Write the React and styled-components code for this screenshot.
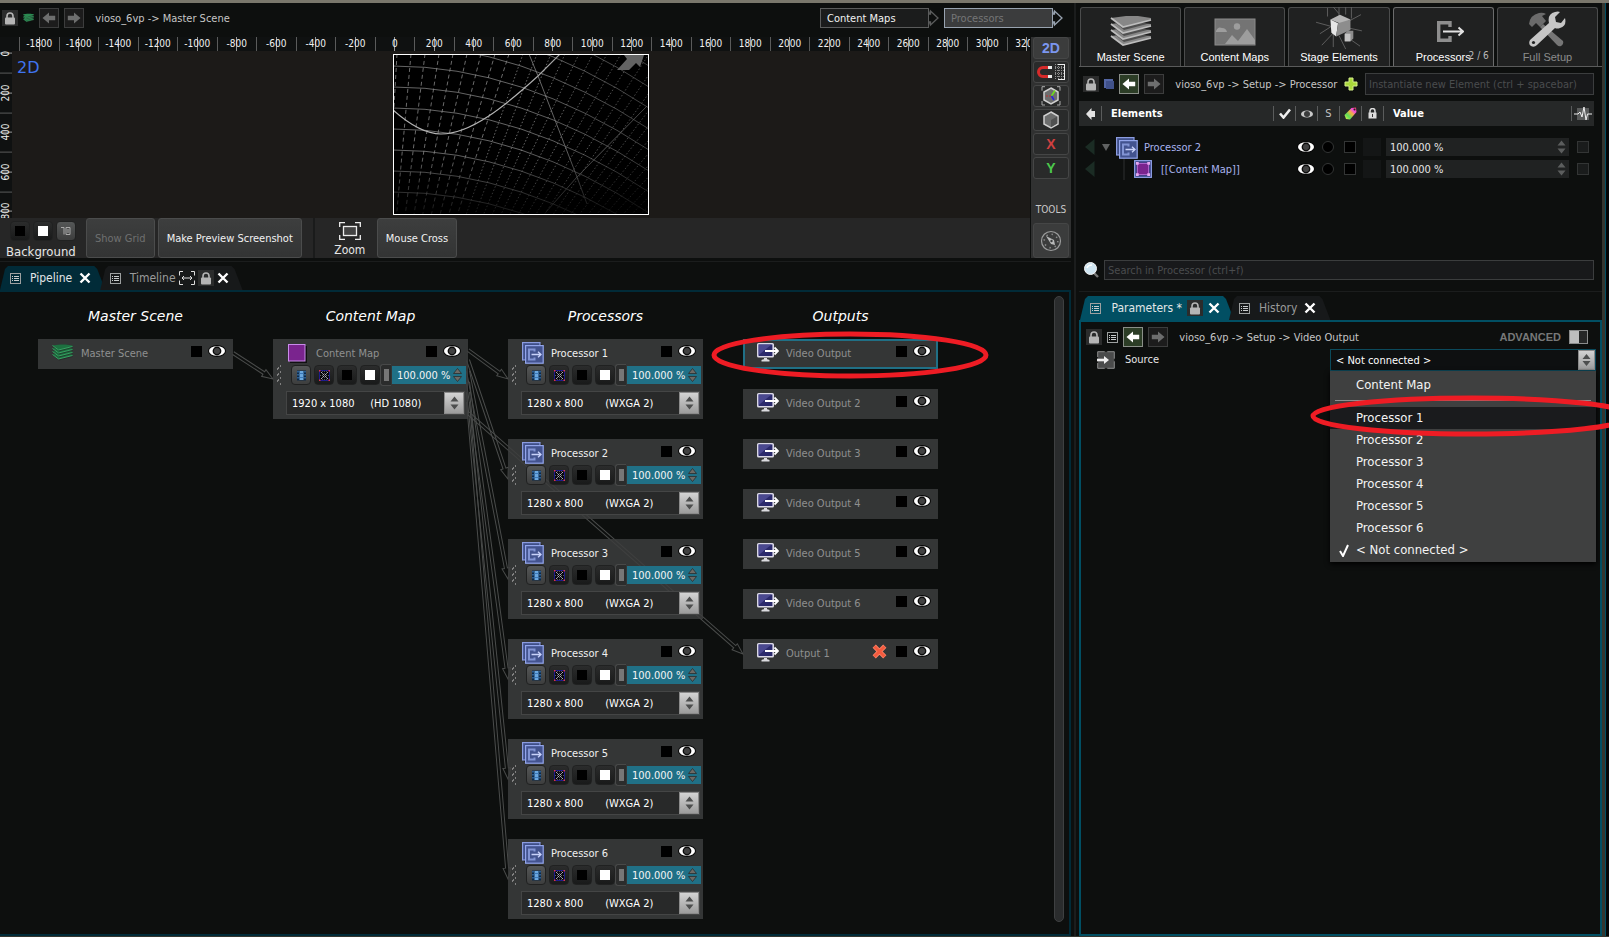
import styled, { createGlobalStyle, css } from "styled-components"

const GlobalStyle = createGlobalStyle`
    :root {
        --bg: #0d0f0e;
        --edge: #1b1d1d;
        --card: rgba(60, 61, 61, 0.85);
        --teal-dark: #012b38;
        --teal: #014f63;
        --accent: #207086;
        --muted: #8f9090;
        --text: #e6e6e6;
        --ui: "DejaVu Sans Condensed", "DejaVu Sans", sans-serif;
        --label: "Liberation Sans", Arial, sans-serif;
    }

    * {
        box-sizing: border-box;
    }

    body {
        margin: 0;
        background: var(--bg);
        color: var(--text);
        font: 11px/14px var(--ui);
        overflow: hidden;
    }

    button, input, select {
        font: inherit;
        color: inherit;
        margin: 0;
        padding: 0;
        border: 0;
        border-radius: 0;
        background: none;
    }

    svg {
        display: block;
        flex: none;
    }
`

const Page = styled.div`
    min-height: 100vh;
    display: flex;
    flex-direction: column;
    border-top: 3px solid #7a776c;
    border-bottom: 1px solid #35362f;
`

const Workspace = styled.div`
    flex: 1;
    display: grid;
    grid-template-columns: minmax(0, 1fr) 8px 523px 7px;
`

const LeftSide = styled.div`
    display: flex;
    flex-direction: column;
    gap: 3px;
    min-width: 0;
`

const Splitter = styled.div`
    border: solid var(--edge);
    border-width: 0 1px;
    margin: 0 3px;
`

const WindowEdge = styled.div`
    border-left: 3px solid #35362f;
    border-right: 3px solid #050505;
    background: var(--teal);
`

/* ---------- shared bits ---------- */

const IconBox = styled.button`
    display: grid;
    place-items: center;
    width: 16px;
    height: 16px;
    background: #2b2c2c;
`

const NavButton = styled.button`
    display: grid;
    place-items: center;
    width: 20px;
    height: 20px;
    color: ${(props) => (props.$active ? "#ffffff" : "#6d6e6e")};
    background: ${(props) => (props.$active ? "#2c3d26" : "#1c1c1c")};
    border: 1px solid ${(props) => (props.$active ? "#8a8f88" : "#3c3d3d")};
`

const Crumb = styled.span`
    padding-top: 2px;
    color: #c6c6c6;
    white-space: pre;
`

const TabStrip = styled.div`
    display: flex;
    align-items: flex-end;
    height: 29px;
    border-top: 1px solid var(--edge);
    padding-left: ${(props) => props.$inset || 0}px;
`

const Tab = styled.div`
    display: flex;
    align-items: center;
    gap: ${(props) => props.$gap || 7}px;
    height: 24px;
    padding: 0 14px 0 10px;
    font-size: 12px;
    color: ${(props) => (props.$active ? "#e2e6e7" : "#9a9b9b")};
    background: ${(props) => (props.$active ? props.$active : "#17191a")};
    clip-path: polygon(0 100%, 5px 3px, 8px 0, calc(100% - 11px) 0, calc(100% - 8px) 3px, 100% 100%);

    & + & {
        margin-left: -5px;
    }

    & span {
        margin-left: 2px;
    }
`

const LockIcon = ({ color = "#b5b5b5" }) => (
    <svg width="12" height="13" viewBox="0 0 12 13">
        <path d="M3 6V4a3 3 0 0 1 6 0v2" fill="none" stroke={color} strokeWidth="1.6" />
        <rect x="1" y="5.5" width="10" height="7" rx="1" fill={color} />
    </svg>
)

const ArrowIcon = ({ flip }) => (
    <svg width="14" height="12" viewBox="0 0 14 12">
        <path
            d="M0.5 6 7 0.5v3.2h6.2v4.6H7v3.2z"
            fill="currentColor"
            transform={flip ? "rotate(180 7 6)" : undefined}
        />
    </svg>
)

const ListIcon = () => (
    <svg width="11" height="11" viewBox="0 0 11 11">
        <rect x="0.5" y="0.5" width="10" height="10" fill="none" stroke="#9da0a0" />
        <path d="M2 3.5h1M4 3.5h5M2 5.5h1M4 5.5h5M2 7.5h1M4 7.5h5" stroke="#c9cccc" />
    </svg>
)

const CloseIcon = () => (
    <svg width="12" height="12" viewBox="0 0 12 12">
        <path d="M1.500 1.500l9 9M10.500 1.500l-9 9" stroke="#fff" strokeWidth="2.400" />
    </svg>
)

const FitIcon = () => (
    <svg width="16" height="14" viewBox="0 0 16 14">
        <path d="M4 .5H.5v4M12 .5h3.500v4M.5 9.500v4H4M15.500 9.500v4H12" fill="none" stroke="#ddd" />
        <path d="M3 7h10M5 5 3 7l2 2M11 5l2 2-2 2" fill="none" stroke="#ddd" />
    </svg>
)

const EyeIcon = () => (
    <svg width="18" height="12" viewBox="0 0 18 12">
        <ellipse cx="9" cy="6" rx="9" ry="6" fill="#080808" />
        <ellipse cx="9" cy="6" rx="8" ry="4.800" fill="#fff" />
        <circle cx="9" cy="6" r="4.400" fill="#0c0c0c" />
        <circle cx="9" cy="6" r="3" fill="#414141" />
    </svg>
)

const Steps = ({ color = "#6d6f6f", outline, gap = 0 }) => (
    <svg width="9" height="14" viewBox="0 0 9 14">
        <path
            d={`M0.5 ${6 - gap / 2}h8L4.5 ${1 - gap / 2}zM0.5 ${8 + gap / 2}h8L4.5 ${13 + gap / 2}z`}
            fill={color}
            stroke={outline}
            strokeWidth="0.8"
        />
    </svg>
)

const ProcessorIcon = () => (
    <svg width="22" height="24" viewBox="0 -2 22 24">
        <path d="M18 1l2 2H18zM1 18l3 3v-3z" fill="#080808" />
        <rect x="0.6" y="0.6" width="17.400" height="17.400" fill="#3f4f88" stroke="#8b9ce0" strokeWidth="1.200" />
        <rect x="3.600" y="3.600" width="17.600" height="17.600" fill="#43538f" stroke="#93a5ea" strokeWidth="1.200" />
        <path d="M12.500 9.500V7.500H7v10h5.500v-2" fill="none" stroke="#8294d4" strokeWidth="2" />
        <path d="M9.500 12.500h9M16 9.800l3 2.700-3 2.700" fill="none" stroke="#c9d2fa" strokeWidth="1.300" />
    </svg>
)

// stack of four sheets, drawn from the bottom one up
const LayersIcon = ({ width, height, face, line }) => (
    <svg width={width} height={height} viewBox="0 0 42 34">
        {[19, 13, 7, 1].map((y) => (
            <g key={y}>
                <path d={`M1 ${y + 3}L14 ${y + 14} 41 ${y + 7} 41 ${y + 2} 28 ${y} 16 ${y}z`} fill="#202121" fillOpacity="0.55" />
                <path d={`M1 ${y + 2}L13 ${y + 11} 41 ${y + 4} 41 ${y + 2} 28 ${y} 16 ${y}z`} fill={face} />
                <path d={`M1 ${y + 2}L13 ${y + 11} 41 ${y + 4}`} fill="none" stroke={line} strokeWidth="1.700" />
            </g>
        ))}
    </svg>
)

/* ---------- scene viewport ---------- */

const SceneHeader = styled.header`
    display: flex;
    align-items: center;
    justify-content: space-between;
    height: 34px;
    margin-bottom: -3px;
    padding: 0 8px 4px 2px;
`

const HeaderGroup = styled.div`
    display: flex;
    align-items: center;
    gap: 5px;
`

const StageButton = styled.button`
    display: flex;
    align-items: center;
    height: 20px;
    color: ${(props) => (props.$current ? "#757677" : "#f2f2f2")};

    & span {
        width: 109px;
        height: 20px;
        padding-left: 6px;
        line-height: 20px;
        text-align: left;
        background: ${(props) => (props.$current ? "#3b3c3d" : "#1b1c1c")};
        border: 1px solid ${(props) => (props.$current ? "#98a3b0" : "#5b5c5c")};
    }

    & svg {
        color: ${(props) => (props.$current ? "#98a3b0" : "#5b5c5c")};
    }
`

const Viewport = styled.section`
    display: grid;
    grid-template-columns: minmax(0, 1fr) 40px;
    column-gap: 1px;
    height: 221px;
`

const ViewportMain = styled.div`
    display: grid;
    grid-template: 14px 167px 40px / 12px minmax(0, 1fr);
`

const TopRuler = styled.div`
    grid-column: 1 / -1;
    overflow: hidden;
    background: #0f1111;
`

const TopTicks = styled.div`
    display: grid;
    grid-template-columns: repeat(26, 1fr);
    height: 14px;
    margin: 0 -16px 0 19px;
`

const TopTick = styled.span`
    display: flex;
    justify-content: center;
    font-size: 10px;
    line-height: 14px;
    color: #f0f0f0;
    border-left: 1px solid #5a5b5b;
    background: linear-gradient(#999, #999) center / 1px 100% no-repeat;
`

const SideRuler = styled.div`
    overflow: hidden;
    background: #0f1111;
`

const SideTicks = styled.div`
    display: grid;
    grid-template-rows: repeat(5, 1fr);
    height: 198px;
    margin-top: -17px;
`

const SideTick = styled.span`
    writing-mode: vertical-rl;
    rotate: 180deg;
    text-align: center;
    width: 12px;
    font-size: 10px;
    line-height: 12px;
    color: #f0f0f0;
    border-top: 1px solid #5a5b5b;
    background: linear-gradient(#999, #999) center / 100% 1px no-repeat;
`

const Canvas = styled.div`
    position: relative;
    display: flex;
    justify-content: center;
    align-items: flex-start;
    padding-top: 3px;
    background: #1c1a18;
`

const ModeLabel = styled.span`
    position: absolute;
    left: 5px;
    top: 7px;
    font: 16px/20px "DejaVu Sans", sans-serif;
    color: #3f74f0;
`

const ViewToolbar = styled.div`
    grid-column: 1 / -1;
    display: flex;
    background: #262626;
`

const SwatchGroup = styled.div`
    width: 86px;
    padding: 3px 0 0 6px;
    font-size: 13px;
    line-height: 22px;
`

const SwatchRow = styled.div`
    display: flex;
    gap: 3px;
    padding-left: 4px;
`

const Swatch = styled.button`
    display: grid;
    place-items: center;
    width: 20px;
    height: 20px;
    border-radius: 4px;
    background: ${(props) => (props.$raised ? "linear-gradient(#555757, #3d3e3e)" : "linear-gradient(#2b2c2c, #191a1a)")};
    border: 1px solid #202121;

    &::before {
        content: "";
        display: ${(props) => (props.$fill ? "block" : "none")};
        width: 10px;
        height: 10px;
        background: ${(props) => props.$fill};
    }
`

const ToolButton = styled.button`
    height: 40px;
    padding: 1px 8px 0;
    margin-right: 3px;
    border: 1px solid #4b4c4c;
    border-radius: 3px;
    background: linear-gradient(#3d3e3e, #333434);
    color: #f2f2f2;

    &:disabled {
        color: #6f7070;
    }
`

const ZoomTool = styled.button`
    display: flex;
    flex-direction: column;
    align-items: center;
    gap: 1px;
    width: 64px;
    margin-left: 8px;
    padding: 4px 0 0 8px;
    font-size: 12px;
    line-height: 18px;
    border-left: 2px solid #1a1b1b;
`

const ToolColumn = styled.aside`
    display: flex;
    flex-direction: column;
    gap: 2px;
    padding: 0 2px;
    background: #303131;
`

const SideButton = styled.button`
    display: grid;
    place-items: center;
    height: ${(props) => props.$height || 22}px;
    border: 1px solid #454646;
    border-radius: 3px;
    background: ${(props) => (props.$on ? "#3b3c3c" : "#292a2a")};
    color: ${(props) => props.$color};
    font: bold 14px/20px var(--label);
`

const ToolsLabel = styled.span`
    margin-top: auto;
    padding-bottom: 4px;
    text-align: center;
    font-size: 10px;
    line-height: 14px;
    color: #c9c9c9;
`

const xLabels = Array.from({ length: 26 }, (_, i) => i * 200 - 1800)
const yLabels = [0, 200, 400, 600, 800]

const arcs = Array.from({ length: 12 }, (_, i) => 12 + (i - 5) * 21)
const spokes = Array.from({ length: 31 }, (_, i) => 24 + i * 14)

function ScenePreview() {
    return (
        <svg width="256" height="161" viewBox="0 0 256 161">
            <defs>
                <linearGradient id="fadeDown" x2="0" y2="1">
                    <stop offset="0.6" stopOpacity="0" />
                    <stop offset="1" stopOpacity="0.8" />
                </linearGradient>
                <linearGradient id="fadeRight">
                    <stop offset="0.5" stopOpacity="0" />
                    <stop offset="1" stopOpacity="0.4" />
                </linearGradient>
            </defs>
            <rect width="256" height="161" fill="#000" />
            <g fill="none" strokeWidth="0.8">
                {arcs.map((y) => (
                    <path key={y} d={`M0 ${y}Q128 ${y} 256 ${y + 84}`} stroke="#7d7d7d" />
                ))}
                {spokes.map((x) => (
                    <line
                        key={x}
                        x1={x - 20}
                        y1="0"
                        x2={x * 0.62 - 20}
                        y2="161"
                        stroke="#868686"
                        strokeDasharray={x < 150 ? "4 3" : "1.500 2"}
                    />
                ))}
                <path d="M0 56C18 72 33 80 48 80C78 80 112 52 145 22L167 0" stroke="#b5b5b5" strokeWidth="1.100" />
                <path d="M136 0l9 22 39 101 10 27M254 52l-70 71-31 35" stroke="#8a8a8a" />
            </g>
            <rect width="256" height="161" fill="url(#fadeDown)" />
            <rect width="256" height="161" fill="url(#fadeRight)" />
            <path d="M224 16l10-11-3-4h20l-4 12-4-4-7 7z" fill="#636363" />
            <rect x="0.5" y="0.5" width="255" height="160" fill="none" stroke="#fff" />
        </svg>
    )
}

const MagnetIcon = () => (
    <svg width="30" height="18" viewBox="0 0 30 18">
        <path d="M13 4.500H7a4.500 4.500 0 0 0 0 9h6" fill="none" stroke="#d62a2a" strokeWidth="3" />
        <path d="M12 4.500h4M12 13.500h4" stroke="#e8e8e8" strokeWidth="3" />
        <path
            d="M19 1.500h9M19 4.500h9M19 7.500h9M19 10.500h9M19 13.500h9M19.500 1v15M22.500 1v15M25.500 1v15"
            fill="none"
            stroke="#8e8e8e"
            strokeDasharray="1 1"
        />
        <path d="M28.500 1v16M22 1.500h7M22 16.500h7" stroke="#eee" />
    </svg>
)

const CubeIcon = ({ axes }) => (
    <svg width="20" height="20" viewBox="0 0 20 20">
        <path d="M10 2l7 4v8l-7 4-7-4V6z" fill="#6c6d6d" stroke="#d0d0d0" strokeWidth="1.500" />
        {axes ? (
            <g fill="none">
                <path d="M10.500 10 14 4.500" stroke="#6fe01a" strokeWidth="1.500" />
                <path d="M10.500 10 13 14" stroke="#2a22dd" strokeWidth="1.500" />
                <path d="M5 10h5.500" stroke="#c03030" strokeDasharray="2 1" />
                <path d="M4 .7H1v4M16 .7h3v4M1 15v4h3M19 15v4h-3" stroke="#aaa" />
            </g>
        ) : (
            <path d="M10 10l6.300-3.500v7L10 17.300z" fill="#505151" />
        )}
    </svg>
)

const CompassIcon = () => (
    <svg width="22" height="22" viewBox="0 0 22 22">
        <circle cx="11" cy="11" r="9.500" fill="none" stroke="#9c9d9d" strokeWidth="1.200" />
        <circle cx="11" cy="11" r="6.800" fill="none" stroke="#8a8b8b" strokeWidth="1.600" strokeDasharray="1.400 4" />
        <path d="M6 6l8 4 1 5-4-1z" fill="#b9baba" />
        <circle cx="11.500" cy="11" r="1.200" fill="#3b3c3c" />
    </svg>
)

function ScenePanel() {
    return (
        <>
            <SceneHeader>
                <HeaderGroup>
                    <IconBox aria-label="Lock view"><LockIcon /></IconBox>
                    <LayersIcon width={11} height={10} face="#2a8a50" line="#3aa566" />
                    <NavButton aria-label="Back"><ArrowIcon /></NavButton>
                    <NavButton aria-label="Forward"><ArrowIcon flip /></NavButton>
                    <Crumb>{"  vioso_6vp -> Master Scene"}</Crumb>
                </HeaderGroup>
                <HeaderGroup>
                    {["Content Maps", "Processors"].map((name, i) => (
                        <StageButton key={name} $current={i === 1}>
                            <span>{name}</span>
                            <svg width="10" height="20" viewBox="0 0 10 20">
                                <path d="M0 3.500V6h1.500V3L9 10l-7.500 7v-3H0v2.500" fill="none" stroke="currentColor" strokeWidth="1.300" />
                            </svg>
                        </StageButton>
                    ))}
                </HeaderGroup>
            </SceneHeader>
            <Viewport>
                <ViewportMain>
                    <TopRuler>
                        <TopTicks>
                            {xLabels.map((value) => <TopTick key={value}>{value}</TopTick>)}
                        </TopTicks>
                    </TopRuler>
                    <SideRuler>
                        <SideTicks>
                            {yLabels.map((value) => <SideTick key={value}>{value}</SideTick>)}
                        </SideTicks>
                    </SideRuler>
                    <Canvas>
                        <ModeLabel>2D</ModeLabel>
                        <ScenePreview />
                    </Canvas>
                    <ViewToolbar>
                        <SwatchGroup>
                            <SwatchRow>
                                <Swatch $fill="#000" aria-label="Black background" />
                                <Swatch $fill="#fff" aria-label="White background" />
                                <Swatch $raised aria-label="Test pattern">
                                    <svg width="10" height="10" viewBox="0 0 10 10">
                                        <path d="M0 1.500h3v7M5 1.500h4v7H5zM7 3v4" fill="none" stroke="#aaa" />
                                    </svg>
                                </Swatch>
                            </SwatchRow>
                            Background
                        </SwatchGroup>
                        <ToolButton disabled>Show Grid</ToolButton>
                        <ToolButton>Make Preview Screenshot</ToolButton>
                        <ZoomTool>
                            <svg width="22" height="18" viewBox="0 0 22 18">
                                <path d="M6 .7H.7V5M16 .7h5.300V5M.7 13v4.300H6M21.300 13v4.300H16" fill="none" stroke="#eee" strokeWidth="1.300" />
                                <rect x="4.500" y="4.500" width="13" height="9" fill="#444" stroke="#eee" strokeWidth="1.300" />
                            </svg>
                            Zoom
                        </ZoomTool>
                        <ToolButton>Mouse Cross</ToolButton>
                    </ViewToolbar>
                </ViewportMain>
                <ToolColumn>
                    <SideButton $on $color="#7b96ee">2D</SideButton>
                    <SideButton aria-label="Snap to grid"><MagnetIcon /></SideButton>
                    <SideButton aria-label="Gizmo"><CubeIcon axes /></SideButton>
                    <SideButton aria-label="Solid view"><CubeIcon /></SideButton>
                    <SideButton $color="#cf4040">X</SideButton>
                    <SideButton $color="#4cc84c">Y</SideButton>
                    <ToolsLabel>TOOLS</ToolsLabel>
                    <SideButton $height={35} $on aria-label="Compass"><CompassIcon /></SideButton>
                </ToolColumn>
            </Viewport>
        </>
    )
}

/* ---------- pipeline ---------- */

const PipelineArea = styled.div`
    flex: 1;
    display: flex;
    flex-direction: column;
`

const Board = styled.section`
    position: relative;
    flex: 1;
    display: flex;
    gap: 40px;
    padding: 14px 0 15px 38px;
    border: 2px solid var(--teal-dark);
    border-left: 0;
`

const Column = styled.div`
    display: flex;
    flex-direction: column;
    gap: 20px;
    width: 195px;

    & h2 {
        margin: 0 0 -7px;
        font: italic 14px/20px "DejaVu Sans", sans-serif;
        text-align: center;
        color: #fff;
    }
`

const Node = styled.article`
    position: relative;
    height: ${(props) => (props.$tall ? 80 : 30)}px;
    background: var(--card);
    ${(props) => props.$selected && css`
        box-shadow: inset 0 0 0 2px var(--accent);
    `}
`

const NodeTitle = styled.div`
    display: grid;
    grid-template-columns: 22px minmax(0, 1fr) 18px 11px 18px;
    column-gap: 6px;
    align-items: center;
    height: 26px;
    padding: 0 7px 0 14px;
    color: ${(props) => (props.$bright ? "#f0f0f0" : "var(--muted)")};

    & > span {
        line-height: 20px;
        padding: 3px 0 0 1px;
    }

    & > :nth-child(n + 3) {
        margin-bottom: 2px;
    }
`

const NodeFlag = styled.button`
    width: 11px;
    height: 11px;
    background: #000;
`

const NodeControls = styled.div`
    display: flex;
    align-items: center;
    gap: 3px;
    height: 20px;
    padding-left: 3px;
`

const ValueBox = styled.label`
    display: flex;
    align-items: center;
    width: 74px;
    height: 18px;
    margin-left: -2px;
    padding-left: 5px;
    background: var(--accent);

    & input {
        width: 56px;
        padding-top: 1px;
        color: #f4f4f4;
        outline: none;
    }
`

const SlimButton = styled.button`
    width: 11px;
    height: 22px;
    margin-left: -3px;
    border: 1px solid #484949;
    border-right: 0;
    border-radius: 3px 0 0 3px;
    background: linear-gradient(#777, #777) center / 5px 12px no-repeat #2b2c2c;
`

const Picker = styled.div`
    display: flex;
    height: ${(props) => props.$height}px;
    border: 1px solid ${(props) => props.$line};
    background: ${(props) => props.$fill};

    & select {
        flex: 1;
        min-width: 0;
        padding: 1px 0 0 5px;
        appearance: none;
        outline: none;
        color: #fff;
    }

    & > span {
        display: grid;
        place-items: center;
        width: ${(props) => props.$knob}px;
        background: linear-gradient(#d3d3d3, #9c9c9c);
        border: 1px solid #8b8b8b;
    }
`

const ResolutionRow = styled.div`
    padding: 6px 3px 0 13px;
`

const Connectors = styled.svg`
    position: absolute;
    left: 0;
    top: 0;
    width: 100%;
    height: 100%;
    pointer-events: none;
`

const ScrollThumb = styled.div`
    align-self: stretch;
    width: 10px;
    margin: -10px 5px -3px auto;
    border: 1px solid #3e4041;
    border-radius: 5px;
    background: #2a2c2d;
`

const Marker = styled.svg`
    position: absolute;
    z-index: 5;
    left: ${(props) => props.$x}px;
    top: ${(props) => props.$y}px;
    pointer-events: none;
`

const GripIcon = () => (
    <svg width="12" height="22" viewBox="0 0 12 22">
        <path
            d="M4 2h1M1 5h1M4 8h1M1 11h1M4 14h1M1 17h1M4 20h1M2 4h1M2 10h1M2 16h1"
            stroke="#9a9b9b"
            strokeWidth="1.300"
        />
    </svg>
)

const FilmIcon = () => (
    <svg width="11" height="11" viewBox="0 0 11 11">
        <rect x="1" y="0.5" width="9" height="10" fill="#0e2a48" />
        <rect x="3.500" y="1" width="4" height="9" fill="#6aa8e0" />
        <path d="M2 1v9M9 1v9" stroke="#4a90d8" strokeDasharray="1.500 1.500" />
        <path d="M3.500 3.500h4M3.500 7.500h4" stroke="#3a78b8" />
    </svg>
)

const WarpIcon = () => (
    <svg width="11" height="11" viewBox="0 0 11 11">
        <rect x="0.5" y="0.5" width="10" height="10" fill="#07070d" stroke="#1c1c8c" />
        <path d="M2 2l7 7M9 2l-7 7" stroke="#c4b9cc" strokeWidth="0.9" />
        <path d="M5.500 1v9M1 5.500h9M3.500 1v9M7.500 1v9" stroke="#777" strokeDasharray="1 1" strokeWidth="0.7" />
        <path d="M0 0h1.500v1.500H0zM9.500 0H11v1.500H9.500zM0 9.500h1.500V11H0zM9.500 9.500H11V11H9.500z" fill="#e0304a" />
    </svg>
)

const MonitorIcon = () => (
    <svg width="22" height="19" viewBox="0 0 22 19">
        <rect x="0.8" y="0.8" width="15.400" height="13" rx="0.8" fill="#2b2a6c" stroke="#dad8e6" strokeWidth="1.600" />
        <path d="M1.600 1.600h13L1.600 12z" fill="#4a4890" />
        <path d="M4.500 17q4-2 8 0v1.500h-8zM7 15h3v2H7z" fill="#dcdce0" />
        <path d="M8 8h12M17.500 4.500l3.500 3.500-3.500 3.500" fill="none" stroke="#fff" strokeWidth="1.800" />
    </svg>
)

const MapIcon = () => (
    <svg width="20" height="22" viewBox="0 -2 20 22">
        <path d="M3 3h17v17H3z" fill="#111" />
        <rect x="1.500" y="1.500" width="16.500" height="16.500" fill="#7a248e" stroke="#c98bea" />
    </svg>
)

const DeleteIcon = () => (
    <svg width="15" height="15" viewBox="0 0 15 15">
        <path d="M2.200 2.200l10.600 10.600M12.800 2.200L2.200 12.800" stroke="#ff8468" strokeWidth="4.600" />
        <path d="M2.500 2.500l10 10M12.500 2.500l-10 10" stroke="#f25a3e" strokeWidth="3" />
    </svg>
)

function PipelineNode({ icon, name, bright, resolution, selected, removable, children }) {
    return (
        <Node $tall={Boolean(resolution)} $selected={selected}>
            <NodeTitle $bright={bright}>
                {icon}
                <span>{name}</span>
                {removable ? <DeleteIcon /> : <i />}
                <NodeFlag aria-label={"Mute " + name} />
                <EyeIcon />
            </NodeTitle>
            {resolution && (
                <>
                    <NodeControls>
                        <GripIcon />
                        <Swatch $raised aria-label="Media"><FilmIcon /></Swatch>
                        <Swatch aria-label="Warp"><WarpIcon /></Swatch>
                        <Swatch $fill="#000" aria-label="Black" />
                        <Swatch $fill="#fff" aria-label="White" />
                        <SlimButton aria-label="Fader" />
                        <ValueBox>
                            <input defaultValue="100.000 %" aria-label={name + " level"} />
                            <Steps color="#6c6a66" outline="#2a2d2d" gap={1} />
                        </ValueBox>
                    </NodeControls>
                    <ResolutionRow>
                        <Picker $height={24} $line="#444545" $fill="#282929" $knob={20}>
                            <select aria-label={name + " resolution"}>
                                <option>{resolution}</option>
                            </select>
                            <span><Steps color="#4d4e4e" gap={1} /></span>
                        </Picker>
                    </ResolutionRow>
                </>
            )}
            {children}
        </Node>
    )
}

// start and end points, measured from the top left corner of the board
const links = [
    [233, 61, 273, 87],
    [468, 58, 508, 87],
    [468, 68, 508, 187],
    [468, 79, 508, 287],
    [468, 90, 508, 387],
    [468, 100, 508, 487],
    [468, 110, 508, 587],
    [468, 121, 743, 362],
]

function Link({ points }) {
    const [x1, y1, x2, y2] = points
    const length = Math.hypot(x2 - x1, y2 - y1)
    const angle = (Math.atan2(y2 - y1, x2 - x1) * 180) / Math.PI
    const neck = length - 11
    return (
        <path
            d={`M0 -1.500H${neck}V-4L${length} 0 ${neck} 4V1.500H0`}
            transform={`translate(${x1} ${y1}) rotate(${angle})`}
        />
    )
}

const wxga = "1280 x 800" + "\u00a0".repeat(7) + "(WXGA 2)"
const hd = "1920 x 1080" + "\u00a0".repeat(5) + "(HD 1080)"
const processors = [1, 2, 3, 4, 5, 6].map((n) => "Processor " + n)
const outputs = ["Video Output", "Video Output 2", "Video Output 3", "Video Output 4", "Video Output 5", "Video Output 6", "Output 1"]

function PipelinePanel() {
    return (
        <PipelineArea>
            <TabStrip>
                <Tab $active="var(--teal-dark)">
                    <ListIcon /><span>Pipeline</span><CloseIcon />
                </Tab>
                <Tab $gap={3}>
                    <ListIcon /><span>&nbsp;Timeline</span><FitIcon />
                    <IconBox aria-label="Lock timeline"><LockIcon /></IconBox>
                    <CloseIcon />
                </Tab>
            </TabStrip>
            <Board>
                {/* first in the board, so that the cards lie over the lines */}
                <Connectors fill="none" stroke="#4a4c4b">
                    {links.map((points) => <Link key={points.join()} points={points} />)}
                </Connectors>
                <Column>
                    <h2>Master Scene</h2>
                    <PipelineNode
                        icon={<LayersIcon width={21} height={17} face="#1d7040" line="#3cab68" />}
                        name="Master Scene"
                    />
                </Column>
                <Column>
                    <h2>Content Map</h2>
                    <PipelineNode icon={<MapIcon />} name="Content Map" resolution={hd} />
                </Column>
                <Column>
                    <h2>Processors</h2>
                    {processors.map((name) => (
                        <PipelineNode key={name} icon={<ProcessorIcon />} name={name} bright resolution={wxga} />
                    ))}
                </Column>
                <Column>
                    <h2>Outputs</h2>
                    {outputs.map((name, index) => (
                        <PipelineNode
                            key={name}
                            icon={<MonitorIcon />}
                            name={name}
                            selected={index === 0}
                            removable={name === "Output 1"}
                        >
                            {index === 0 && (
                                <Marker $x={-32} $y={-8} width="278" height="48">
                                    <ellipse cx="139" cy="24" rx="136" ry="21" fill="none" stroke="#ee1c24" strokeWidth="5" />
                                </Marker>
                            )}
                        </PipelineNode>
                    ))}
                </Column>
                <ScrollThumb />
            </Board>
        </PipelineArea>
    )
}

/* ---------- element tree ---------- */

const RightSide = styled.div`
    display: flex;
    flex-direction: column;
    min-width: 0;
`

const SetupTabs = styled.nav`
    display: grid;
    grid-template-columns: repeat(5, 1fr);
    grid-template-rows: minmax(0, 1fr);
    column-gap: 3px;
    height: 64px;
    padding: 4px 4px 0 1px;
    border-bottom: 1px solid #5a5b5b;
`

const SetupTab = styled.button`
    position: relative;
    display: flex;
    flex-direction: column;
    align-items: center;
    justify-content: flex-end;
    padding-bottom: 1px;
    border: 1px solid ${(props) => (props.$current ? "#6b6c6c" : "#4b4c4c")};
    border-bottom: 0;
    border-radius: 3px 3px 0 0;
    background: #202121;
    color: ${(props) => (props.$dim ? "#8b8c8c" : "#fff")};
    font: 11px/16px var(--label);

    & small {
        position: absolute;
        right: 4px;
        bottom: 3px;
        font: 10px/14px var(--ui);
        color: #b9b9b9;
    }
`

const PathRow = styled.div`
    display: flex;
    align-items: center;
    gap: 5px;
    height: 34px;
    padding: 0 8px 0 4px;
`

const AddMark = styled.span`
    margin: 0 2px 0 auto;
`

const TextField = styled.input`
    height: ${(props) => props.$height || 20}px;
    flex: ${(props) => (props.$width ? "0 0 " + props.$width + "px" : 1)};
    min-width: 0;
    padding: 0 3px;
    border: 1px solid #3b3d3e;
    background: #18191b;
    outline: none;

    &::placeholder {
        color: #4a4c4e;
    }
`

const Tree = styled.table`
    width: 515px;
    table-layout: fixed;
    border-collapse: collapse;

    & th, & td {
        padding: 0;
        text-align: left;
        height: 22px;
    }

    & thead tr {
        height: 25px;
        background: #262828;
        color: #fff;
    }

    & tbody::before {
        content: "";
        display: block;
        height: 10px;
    }
`

const HeadCell = styled.div`
    display: flex;
    align-items: center;
    justify-content: ${(props) => (props.$start ? "flex-start" : "center")};
    height: 15px;
    padding-left: ${(props) => (props.$start ? 9 : 0)}px;
    border-left: 1px solid ${(props) => (props.$first ? "transparent" : "#5a5c5c")};
    font-weight: ${(props) => (props.$plain ? "normal" : "bold")};
    color: ${(props) => (props.$plain ? "#c2c2c2" : "#fff")};
`

const Centered = styled.div`
    display: grid;
    place-items: center;
`

const TreeLabel = styled.div`
    display: flex;
    align-items: center;
    gap: ${(props) => (props.$child ? 9 : 6)}px;
    height: 22px;
    margin-left: ${(props) => (props.$child ? 22 : 1)}px;
    padding-left: ${(props) => (props.$child ? 9 : 0)}px;
    border-left: ${(props) => (props.$child ? 2 : 0)}px solid #1d1f1f;
    color: #a8b3ee;

    & span {
        padding-top: 1px;
    }
`

const Dot = styled.span`
    width: 12px;
    height: 12px;
    background: ${(props) => props.$fill || "#000"};
    border: 1px solid #333535;
    border-radius: ${(props) => (props.$round ? 6 : 0)}px;
`

const FaintBox = styled.div`
    width: 18px;
    height: 18px;
    background: #141616;
    margin-left: 2px;
`

const LevelField = styled.label`
    display: flex;
    align-items: center;
    height: 18px;
    margin: 0 2px 0 3px;
    padding: 0 3px 0 4px;
    background: #202222;

    & input {
        flex: 1;
        min-width: 0;
        padding-top: 1px;
        outline: none;
    }
`

const SearchRow = styled.div`
    display: flex;
    align-items: center;
    gap: 5px;
    margin-top: auto;
    padding: 0 8px 0 5px;
`

const TreePanel = styled.section`
    display: flex;
    flex-direction: column;
    height: 288px;
    padding-bottom: 11px;
`

const CheckIcon = () => (
    <svg width="12" height="11" viewBox="0 0 12 11">
        <path d="M1 5.500l3.500 4L11 1.500" fill="none" stroke="#eee" strokeWidth="2.600" />
    </svg>
)

const PhotoIcon = () => (
    <svg width="42" height="31" viewBox="0 0 42 31">
        <rect x="1" y="1" width="40" height="26" fill="#747474" stroke="#8b8b8b" />
        <path d="M2 13q2-5 6-3 4 0 5 4H2zM11 26l7-9 6 6 9-12 8 11v4z" fill="#9d9d9d" />
        <circle cx="23" cy="8.500" r="3.200" fill="#9d9d9d" />
    </svg>
)

const StageIcon = () => (
    <svg width="50" height="42" viewBox="0 0 52 44">
        <path
            d="M14 1v9M20 0l6 7M26 0v10M33 0v8M39 0v12M2 16l22 6M6 28l14-9M8 40l16-17M26 30l7 14M36 22l14 3M36 15l13-7M38 34l10 7M20 26v16"
            stroke="#606060"
        />
        <path d="M17 13l10-5 11 5-9 5z" fill="#b5b5b5" />
        <path d="M17 13l8 4-2 14-5-4z" fill="#e6e6e6" />
        <path d="M25 17l13-4v11l-15 7z" fill="#8d8d8d" />
        <path d="M32 28l3-3h6v8l-3 3h-6z" fill="#8c8c8c" />
        <path d="M32 28h6v8h-6z" fill="#c4c4c4" />
    </svg>
)

// the arrow runs out to the right of the tab centre
const OutIcon = () => (
    <svg width="42" height="31" viewBox="0 0 42 31">
        <path d="M28 9V4.700H16.700v17.600H28V18" fill="none" stroke="#8e8e8e" strokeWidth="3.400" />
        <path d="M21 13.500h19M36.500 9.500l4.500 4-4.500 4" fill="none" stroke="#e2e2e2" strokeWidth="1.900" />
    </svg>
)

const WrenchIcon = () => (
    <svg width="38" height="39" viewBox="0 0 38 39">
        <path d="M1 14q1-9 10-11 4-1 7 1l-4 2 4 5-6 6-4-4-4 4z" fill="#6b6b6b" />
        <path d="M15 14l20 17q1 3-2 5-2 1-4-1L12 17z" fill="#767676" />
        <path d="M2 30l19-17q-2-9 6-11 3-1 5 0l-5 5 1 5 5 1 4-5q2 8-5 10-3 1-5 0L9 35q-3 3-6 1t-1-6z" fill="#c6c6c6" />
        <circle cx="5.500" cy="32.500" r="1.600" fill="#202121" />
    </svg>
)

const TagIcon = () => (
    <svg width="13" height="13" viewBox="0 0 13 13">
        <defs>
            <linearGradient id="tag" x1="1" y1="0" x2="0" y2="1">
                <stop offset="0" stopColor="#f0404a" />
                <stop offset="0.25" stopColor="#f04fe0" />
                <stop offset="0.45" stopColor="#f0b040" />
                <stop offset="0.7" stopColor="#5be05a" />
                <stop offset="1" stopColor="#f8f040" />
            </linearGradient>
        </defs>
        <path d="M.5 8 7.500 1 12 .5 12.500 5 6 12.500 2 12z" fill="url(#tag)" />
        <circle cx="10.500" cy="2.600" r="1" fill="#222" />
    </svg>
)

const PulseIcon = () => (
    <svg width="18" height="16" viewBox="0 0 18 16">
        <rect x="3" y="2" width="12" height="12" fill="#5a5c5c" />
        <path d="M0 8h4l2-2 2 5 2-10 2 13 1.500-6H18" fill="none" stroke="#f0f0f0" />
    </svg>
)

const ContentIcon = () => (
    <svg width="18" height="18" viewBox="0 0 19 19">
        <rect x="0.7" y="0.7" width="17.600" height="17.600" fill="#30387a" stroke="#8fa2e8" strokeWidth="1.300" />
        <rect x="3.500" y="3.500" width="12" height="12" fill="#7a248e" stroke="#c070d8" />
        <path d="M2 2h3v3H2zM14 2h3v3h-3zM2 14h3v3H2zM14 14h3v3h-3z" fill="#e6a8f0" />
    </svg>
)

const SideArrow = () => (
    <svg width="10" height="16" viewBox="0 0 10 16">
        <path d="M9.500 0v16L0 8z" fill="#1b2c24" />
    </svg>
)

const setupTabs = [
    { name: "Master Scene", icon: <LayersIcon width={42} height={34} face="#878787" line="#bdbdbd" /> },
    { name: "Content Maps", icon: <PhotoIcon /> },
    { name: "Stage Elements", icon: <StageIcon /> },
    { name: "Processors", icon: <OutIcon />, count: "2 / 6" },
    { name: "Full Setup", icon: <WrenchIcon />, dim: true },
]

function TreeRow({ child, name, icon }) {
    return (
        <tr>
            <td><Centered><SideArrow /></Centered></td>
            <td>
                <TreeLabel $child={child}>
                    {!child && (
                        <svg width="8" height="7" viewBox="0 0 8 7"><path d="M0 0h8L4 7z" fill="#606262" /></svg>
                    )}
                    {icon}
                    <span>{name}</span>
                </TreeLabel>
            </td>
            <td />
            <td><Centered><EyeIcon /></Centered></td>
            <td><Centered><Dot $round /></Centered></td>
            <td><Centered><Dot /></Centered></td>
            <td><FaintBox /></td>
            <td>
                <LevelField>
                    <input defaultValue="100.000 %" aria-label={name + " value"} />
                    <Steps color="#5c5e5e" gap={1} />
                </LevelField>
            </td>
            <td><Centered><Dot $fill="#1a1c1c" /></Centered></td>
        </tr>
    )
}

function ElementsPanel() {
    return (
        <TreePanel>
            <SetupTabs>
                {setupTabs.map((tab) => (
                    <SetupTab key={tab.name} $current={Boolean(tab.count)} $dim={tab.dim}>
                        {tab.icon}
                        {tab.name}
                        {tab.count && <small>{tab.count}</small>}
                    </SetupTab>
                ))}
            </SetupTabs>
            <PathRow>
                <IconBox aria-label="Lock elements"><LockIcon /></IconBox>
                <svg width="10" height="10" viewBox="0 0 10 10">
                    <path d="M0 0h9v9H0z" fill="#5366a4" /><path d="M2 2h8v8H2z" fill="#40518a" />
                </svg>
                <NavButton $active aria-label="Back"><ArrowIcon /></NavButton>
                <NavButton aria-label="Forward"><ArrowIcon flip /></NavButton>
                <Crumb>{"  vioso_6vp -> Setup -> Processor"}</Crumb>
                <AddMark>
                    <svg width="14" height="14" viewBox="0 0 14 14">
                        <path d="M5 1h4v4h4v4H9v4H5V9H1V5h4z" fill="#a9d83a" stroke="#d6f08a" />
                    </svg>
                </AddMark>
                <TextField
                    $width={229}
                    $height={22}
                    placeholder="Instantiate new Element (ctrl + spacebar)"
                    aria-label="Instantiate new Element"
                />
            </PathRow>
            <Tree>
                <colgroup>
                    <col width="22" /><col width="172" />
                    <col width="22" /><col width="22" /><col width="22" /><col width="22" /><col width="22" />
                    <col width="188" /><col width="23" />
                </colgroup>
                <thead>
                    <tr>
                        <th>
                            <HeadCell $first>
                                <svg width="10" height="12" viewBox="0 0 10 12">
                                    <path d="M0 6 5.500 0v3H9v6H5.500v3z" fill="#e2e2e2" />
                                </svg>
                            </HeadCell>
                        </th>
                        <th><HeadCell $start>Elements</HeadCell></th>
                        <th><HeadCell><CheckIcon /></HeadCell></th>
                        <th>
                            <HeadCell>
                                <svg width="12" height="8" viewBox="0 0 12 8">
                                    <ellipse cx="6" cy="4" rx="6" ry="3.600" fill="#c9c9c9" />
                                    <circle cx="6" cy="4" r="3" fill="#3b3c3c" />
                                </svg>
                            </HeadCell>
                        </th>
                        <th><HeadCell $plain>S</HeadCell></th>
                        <th><HeadCell><TagIcon /></HeadCell></th>
                        <th>
                            <HeadCell>
                                <svg width="9" height="11" viewBox="0 0 9 11">
                                    <path d="M2 5V3a2.500 2.500 0 0 1 5 0v2" fill="none" stroke="#ddd" strokeWidth="1.500" />
                                    <rect x="0.5" y="4.500" width="8" height="6" fill="#ddd" />
                                    <rect x="4" y="6" width="1" height="3" fill="#333" />
                                </svg>
                            </HeadCell>
                        </th>
                        <th><HeadCell $start>Value</HeadCell></th>
                        <th><HeadCell><PulseIcon /></HeadCell></th>
                    </tr>
                </thead>
                <tbody>
                    <TreeRow name="Processor 2" icon={<ProcessorIcon />} />
                    <TreeRow child name="[[Content Map]]" icon={<ContentIcon />} />
                </tbody>
            </Tree>
            <SearchRow>
                <svg width="15" height="16" viewBox="0 0 15 16">
                    <path d="M9 10l5 5" stroke="#777" strokeWidth="2.400" />
                    <circle cx="6.500" cy="6.500" r="6" fill="#cfe6f2" stroke="#f4f4f4" />
                    <path d="M3 6q1-3 5-3" fill="none" stroke="#fff" strokeWidth="1.600" />
                </svg>
                <TextField placeholder="Search in Processor (ctrl+f)" aria-label="Search in Processor" />
            </SearchRow>
        </TreePanel>
    )
}

/* ---------- parameters ---------- */

const ParamsPanel = styled.section`
    flex: 1;
    padding: 5px 4px 0 5px;
    border: 2px solid var(--teal);
`

const ParamsPath = styled.div`
    display: flex;
    align-items: center;
    gap: 5px;
    height: 20px;
`

const Advanced = styled.label`
    display: flex;
    align-items: center;
    gap: 8px;
    margin-left: auto;
    padding-right: 8px;
    font: bold 11px/14px var(--label);
    color: #777878;

    & input {
        appearance: none;
        width: 19px;
        height: 14px;
        border: 1px solid #8b8c8c;
        background: linear-gradient(90deg, #bdbdbd 9px, #262727 9px);
    }
`

const ParamRow = styled.div`
    display: grid;
    grid-template-columns: 1fr 266px;
    align-items: center;
    height: 22px;
    margin-top: 2px;
`

const ParamName = styled.label`
    display: flex;
    align-items: center;
    gap: 10px;
    padding-left: 11px;
`

const SourceField = styled.div`
    position: relative;
`

const Menu = styled.ul`
    position: absolute;
    left: 0;
    right: 0;
    top: 100%;
    margin: 0;
    padding: 3px 0 1px;
    list-style: none;
    background: #3f4040;
    box-shadow: 0 2px 5px #000;
`

const MenuItem = styled.li`
    position: relative;
    display: flex;
    align-items: center;
    height: 22px;
    padding-left: 26px;
    font-size: 13px;
    color: #f4f4f4;
    ${(props) => props.$hover && css`
        background: #1a1b1d;
    `}
    ${(props) => props.$checked && css`
        padding-left: 9px;
        gap: 7px;
    `}
`

const MenuDivider = styled.li`
    height: 1px;
    margin: 4px 5px 6px;
    background: #8e8f8f;
`

function ParametersPanel() {
    return (
        <>
            <TabStrip $inset={1}>
                <Tab $active="var(--teal)" $gap={5}>
                    <ListIcon /><span>&nbsp;Parameters *</span>
                    <IconBox aria-label="Lock parameters"><LockIcon /></IconBox>
                    <CloseIcon />
                </Tab>
                <Tab>
                    <ListIcon /><span>History</span><CloseIcon />
                </Tab>
            </TabStrip>
            <ParamsPanel>
                <ParamsPath>
                    <IconBox aria-label="Lock path"><LockIcon /></IconBox>
                    <ListIcon />
                    <NavButton $active aria-label="Back"><ArrowIcon /></NavButton>
                    <NavButton aria-label="Forward"><ArrowIcon flip /></NavButton>
                    <Crumb>{"  vioso_6vp -> Setup -> Video Output"}</Crumb>
                    <Advanced>
                        ADVANCED
                        <input type="checkbox" />
                    </Advanced>
                </ParamsPath>
                <ParamRow>
                    <ParamName htmlFor="source">
                        <svg width="18" height="18" viewBox="0 0 18 18">
                            <rect x="0.7" y="0.7" width="16.600" height="16.600" fill="#4a4b4b" />
                            <path d="M.7 6V.7h7M10.300.7h7v7M17.300 10.300v7h-7M7.700 17.300h-7V12" fill="none" stroke="#8a8b8b" />
                            <path d="M0 9h8" stroke="#eee" strokeWidth="2.600" />
                            <path d="M7 5l5 4-5 4z" fill="#eee" />
                        </svg>
                        Source
                    </ParamName>
                    <SourceField>
                        <Picker $height={22} $line="#0b4a5c" $fill="#0e1011" $knob={17}>
                            <select id="source">
                                <option>&lt; Not connected &gt;</option>
                            </select>
                            <span><Steps color="#4d4e4e" /></span>
                        </Picker>
                        <Menu role="listbox" aria-label="Source">
                            <MenuItem role="option">Content Map</MenuItem>
                            <MenuDivider role="separator" />
                            {processors.map((name, index) => (
                                <MenuItem key={name} role="option" $hover={index === 0}>
                                    {name}
                                    {index === 0 && (
                                        <Marker $x={-20} $y={-12} width="324" height="44">
                                            <ellipse cx="162" cy="21" rx="159" ry="18" fill="none" stroke="#ee1c24" strokeWidth="5" />
                                        </Marker>
                                    )}
                                </MenuItem>
                            ))}
                            <MenuItem role="option" $checked aria-selected="true">
                                <svg width="10" height="13" viewBox="0 0 10 13">
                                    <path d="M1 7l3 5L9 1" fill="none" stroke="#fff" strokeWidth="2" />
                                </svg>
                                &lt; Not connected &gt;
                            </MenuItem>
                        </Menu>
                    </SourceField>
                </ParamRow>
            </ParamsPanel>
        </>
    )
}

export default function App() {
    return (
        <Page>
            <GlobalStyle />
            <Workspace>
                <LeftSide>
                    <ScenePanel />
                    <PipelinePanel />
                </LeftSide>
                <Splitter />
                <RightSide>
                    <ElementsPanel />
                    <ParametersPanel />
                </RightSide>
                <WindowEdge />
            </Workspace>
        </Page>
    )
}
